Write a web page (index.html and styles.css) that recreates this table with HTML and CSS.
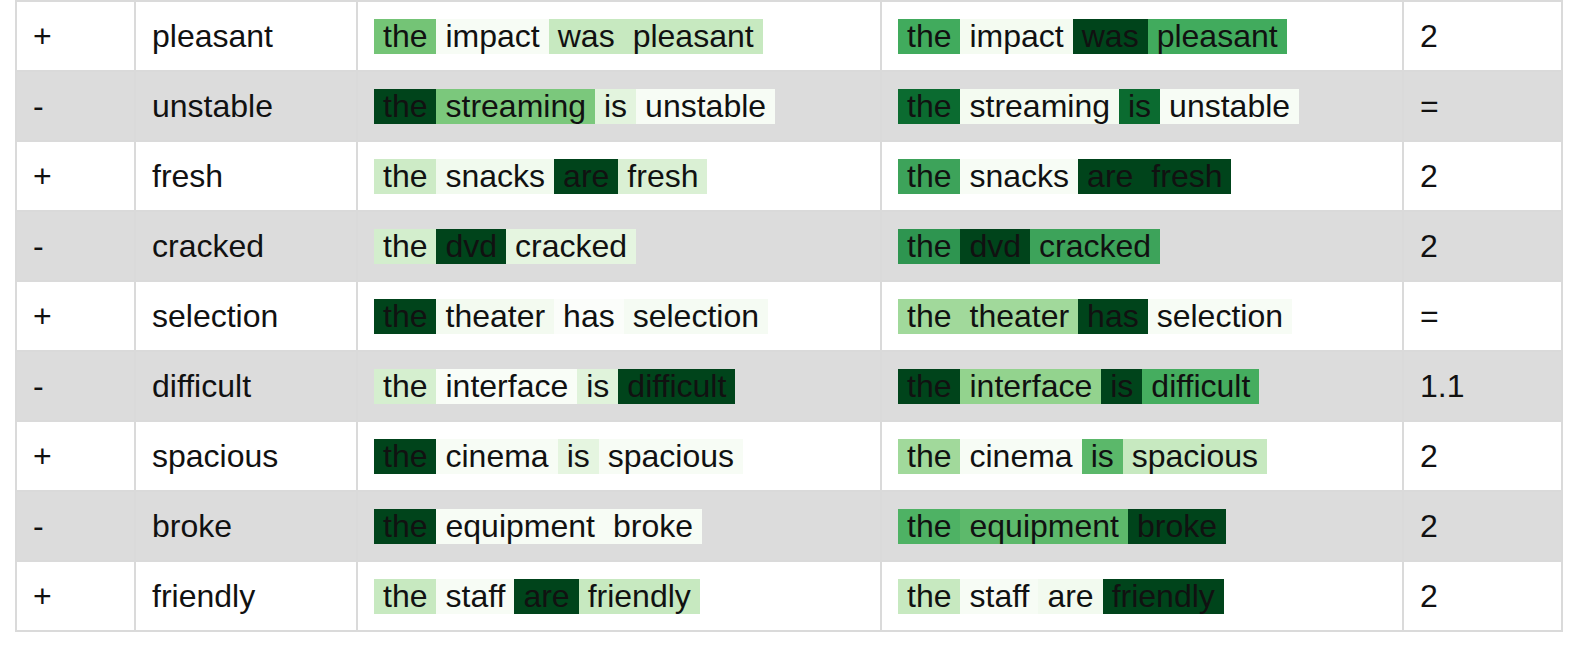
FILE: index.html
```html
<!DOCTYPE html>
<html lang="en">
<head>
<meta charset="utf-8">
<title>Token attributions</title>
<link rel="stylesheet" href="styles.css">
</head>
<body>
<table class="attr">
  <colgroup>
    <col class="c-sign"><col class="c-word"><col class="c-sent"><col class="c-sent2"><col class="c-score">
  </colgroup>
  <tbody>
    <tr>
      <td>+</td><td>pleasant</td>
      <td><div class="sent"><span class="tk" style="background:#74c476">the</span><span class="tk" style="background:#f7fcf5">impact</span><span class="tk" style="background:#c7e9c0">was</span><span class="tk" style="background:#c7e9c0">pleasant</span></div></td>
      <td><div class="sent"><span class="tk" style="background:#41ab5d">the</span><span class="tk" style="background:#f4fbf1">impact</span><span class="tk" style="background:#00441b">was</span><span class="tk" style="background:#41ab5d">pleasant</span></div></td>
      <td>2</td>
    </tr>
    <tr class="alt">
      <td>-</td><td>unstable</td>
      <td><div class="sent"><span class="tk" style="background:#00441b">the</span><span class="tk" style="background:#7bc87c">streaming</span><span class="tk" style="background:#e3f4de">is</span><span class="tk" style="background:#f7fcf5">unstable</span></div></td>
      <td><div class="sent"><span class="tk" style="background:#0b6b30">the</span><span class="tk" style="background:#f4fbf1">streaming</span><span class="tk" style="background:#0b6b30">is</span><span class="tk" style="background:#f7fcf5">unstable</span></div></td>
      <td>=</td>
    </tr>
    <tr>
      <td>+</td><td>fresh</td>
      <td><div class="sent"><span class="tk" style="background:#cdebc6">the</span><span class="tk" style="background:#f1faee">snacks</span><span class="tk" style="background:#00441b">are</span><span class="tk" style="background:#daf0d4">fresh</span></div></td>
      <td><div class="sent"><span class="tk" style="background:#3da35a">the</span><span class="tk" style="background:#f7fcf5">snacks</span><span class="tk" style="background:#00441b">are</span><span class="tk" style="background:#00441b">fresh</span></div></td>
      <td>2</td>
    </tr>
    <tr class="alt">
      <td>-</td><td>cracked</td>
      <td><div class="sent"><span class="tk" style="background:#d3eecd">the</span><span class="tk" style="background:#00441b">dvd</span><span class="tk" style="background:#e5f5e0">cracked</span></div></td>
      <td><div class="sent"><span class="tk" style="background:#2e9550">the</span><span class="tk" style="background:#00441b">dvd</span><span class="tk" style="background:#3da35a">cracked</span></div></td>
      <td>2</td>
    </tr>
    <tr>
      <td>+</td><td>selection</td>
      <td><div class="sent"><span class="tk" style="background:#00441b">the</span><span class="tk" style="background:#f3faf0">theater</span><span class="tk" style="background:#fbfdfa">has</span><span class="tk" style="background:#f5fbf3">selection</span></div></td>
      <td><div class="sent"><span class="tk" style="background:#a1d99b">the</span><span class="tk" style="background:#a1d99b">theater</span><span class="tk" style="background:#00441b">has</span><span class="tk" style="background:#f7fcf5">selection</span></div></td>
      <td>=</td>
    </tr>
    <tr class="alt">
      <td>-</td><td>difficult</td>
      <td><div class="sent"><span class="tk" style="background:#d5efcf">the</span><span class="tk" style="background:#f9fdf7">interface</span><span class="tk" style="background:#e0f3db">is</span><span class="tk" style="background:#00441b">difficult</span></div></td>
      <td><div class="sent"><span class="tk" style="background:#00441b">the</span><span class="tk" style="background:#93d38e">interface</span><span class="tk" style="background:#00441b">is</span><span class="tk" style="background:#45ad5f">difficult</span></div></td>
      <td>1.1</td>
    </tr>
    <tr>
      <td>+</td><td>spacious</td>
      <td><div class="sent"><span class="tk" style="background:#00441b">the</span><span class="tk" style="background:#f7fcf5">cinema</span><span class="tk" style="background:#e5f5e0">is</span><span class="tk" style="background:#f7fcf5">spacious</span></div></td>
      <td><div class="sent"><span class="tk" style="background:#a1d99b">the</span><span class="tk" style="background:#f7fcf5">cinema</span><span class="tk" style="background:#5bb86a">is</span><span class="tk" style="background:#c7e9c0">spacious</span></div></td>
      <td>2</td>
    </tr>
    <tr class="alt">
      <td>-</td><td>broke</td>
      <td><div class="sent"><span class="tk" style="background:#00441b">the</span><span class="tk" style="background:#f7fcf5">equipment</span><span class="tk" style="background:#f7fcf5">broke</span></div></td>
      <td><div class="sent"><span class="tk" style="background:#4eb264">the</span><span class="tk" style="background:#5db96b">equipment</span><span class="tk" style="background:#00441b">broke</span></div></td>
      <td>2</td>
    </tr>
    <tr>
      <td>+</td><td>friendly</td>
      <td><div class="sent"><span class="tk" style="background:#c7e9c0">the</span><span class="tk" style="background:#f7fcf5">staff</span><span class="tk" style="background:#00441b">are</span><span class="tk" style="background:#c7e9c0">friendly</span></div></td>
      <td><div class="sent"><span class="tk" style="background:#c7e9c0">the</span><span class="tk" style="background:#f7fcf5">staff</span><span class="tk" style="background:#f2faef">are</span><span class="tk" style="background:#00441b">friendly</span></div></td>
      <td>2</td>
    </tr>
  </tbody>
</table>
</body>
</html>
```
FILE: styles.css
```css
html, body {
  margin: 0;
  padding: 0;
  background: #ffffff;
}

body {
  font-family: "Liberation Sans", Arial, sans-serif;
  color: #111111;
}

.attr {
  margin-left: 15px;
  border-collapse: collapse;
  table-layout: fixed;
  width: 1548px;
  font-size: 32px;
}

.c-sign { width: 119px; }
.c-word { width: 222px; }
.c-sent { width: 524px; }
.c-sent2 { width: 522px; }
.c-score { width: 159px; }

.attr td {
  border: 2px solid #dadada;
  height: 68px;
  padding: 0 0 0 16px;
  vertical-align: middle;
  white-space: nowrap;
  line-height: 36px;
}

.attr tr.alt td {
  background: #dcdcdc;
}

.sent {
  display: flex;
  align-items: center;
}

.tk {
  display: block;
  padding: 0 9px;
  height: 35px;
  line-height: 35px;
}
```
